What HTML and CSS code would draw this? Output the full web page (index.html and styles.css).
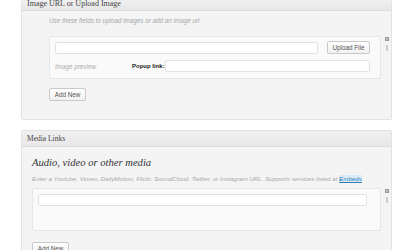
FILE: index.html
```html
<!DOCTYPE html>
<html>
<head>
<meta charset="utf-8">
<link rel="stylesheet" href="styles.css">
</head>
<body>
<div class="panel first">
  <div class="panel-head">Image URL or Upload Image</div>
  <div class="panel-body body-one">
    <p class="hint">Use these fields to upload images or add an image url</p>
    <div class="repeat">
      <div class="box box-one">
        <div class="row">
          <span class="field wide"></span>
          <span class="btn">Upload File</span>
        </div>
        <div class="row row2">
          <span class="preview">Image preview</span>
          <span class="label">Popup link:</span>
          <span class="field popup"></span>
        </div>
      </div>
      <div class="tools"><span class="sq"></span><span class="bar"></span></div>
    </div>
    <span class="btn add">Add New</span>
  </div>
</div>

<div class="panel second">
  <div class="panel-head tall">Media Links</div>
  <div class="panel-body body-two">
    <h2 class="title">Audio, video or other media</h2>
    <p class="hint hint2">Enter a Youtube, Vimeo, DailyMotion, Flickr, SoundCloud, Twitter, or Instagram URL. Supports services listed at <a class="link">Embeds</a></p>
    <div class="repeat">
      <div class="box box-two">
        <span class="field full"></span>
      </div>
      <div class="tools"><span class="sq"></span><span class="bar"></span></div>
    </div>
    <span class="btn add add2">Add New</span>
  </div>
</div>
</body>
</html>
```

FILE: styles.css
```css
html, body { margin: 0; padding: 0; background: #fff; }
body { font-family: "Liberation Sans", Arial, sans-serif; overflow: hidden; height: 250px; }

.panel {
  margin-left: 21px;
  width: 369px;
  background: #f4f4f4;
  border: 1px solid #e3e3e3;
  border-radius: 2px;
}
.first { border-top: none; height: 119px; }
.second { margin-top: 10px; height: 200px; }

.panel-head {
  height: 10px;
  line-height: 8px;
  padding-left: 5px;
  font-family: "Liberation Serif", "DejaVu Serif", serif;
  font-size: 8px;
  color: #464646;
  white-space: nowrap;
  background: linear-gradient(#f0f0f0, #e8e8e8);
  border-bottom: 1px solid #dcdcdc;
}
.panel-head.tall { height: 15px; line-height: 16px; font-size: 7.5px; }

.body-one { padding: 0 0 0 27px; }
.body-two { padding: 0 0 0 10px; }

.hint {
  margin: 0;
  font-size: 6.3px;
  font-style: italic;
  color: #a8a8a8;
  white-space: nowrap;
}
.body-one .hint { padding-top: 6px; height: 19px; line-height: 7px; }
.hint2 { margin-top: 6px; height: 13px; line-height: 7px; font-size: 6.2px; }

.title {
  margin: 0;
  padding-top: 9px;
  font-family: "Liberation Serif", "DejaVu Serif", serif;
  font-style: italic;
  font-weight: normal;
  font-size: 10.6px;
  line-height: 13px;
  color: #333;
  white-space: nowrap;
}
.link { color: #2a7fb8; text-decoration: underline; background: #dceaf5; }

.repeat { display: flex; align-items: flex-start; }
.box {
  background: #fafafa;
  border: 1px solid #e6e6e6;
  border-radius: 2px;
  box-sizing: border-box;
}
.box-one { width: 332px; height: 43px; padding: 4px 10px 0 5px; }
.box-two { width: 349px; height: 43px; padding: 5px 13px 0 5px; }

.row { display: flex; align-items: center; }
.row2 { margin-top: 6px; }

.field {
  display: block;
  flex: none;
  height: 12px;
  box-sizing: border-box;
  background: #fff;
  border: 1px solid #e2e2e2;
  border-radius: 2px;
}
.wide { width: 263px; }
.full { width: 329px; }
.popup { width: 205px; }

.btn {
  display: inline-flex;
  align-items: center;
  justify-content: center;
  box-sizing: border-box;
  height: 13px;
  padding: 0 2px;
  font-size: 6.3px;
  color: #555;
  white-space: nowrap;
  background: linear-gradient(#fefefe, #f1f1f1);
  border: 1px solid #c9c9c9;
  border-radius: 2px;
}
.row .btn { margin-left: 9px; width: 43px; flex: none; }
.add { width: 37px; margin-top: 9px; }
.add2 { margin-top: 11px; }

.preview { width: 77px; flex: none; font-size: 6.3px; font-style: italic; color: #aaa; white-space: nowrap; }
.label { width: 33px; flex: none; font-size: 6px; font-weight: bold; color: #222; white-space: nowrap; }

.tools { display: flex; flex-direction: column; align-items: center; margin-left: 3px; width: 6px; }
.sq { width: 4px; height: 4px; margin-top: 1px; background: #bbb; border: 1px solid #9a9a9a; box-sizing: border-box; }
.bar { width: 2px; height: 6px; margin-top: 4px; background: #ccc; }
```
